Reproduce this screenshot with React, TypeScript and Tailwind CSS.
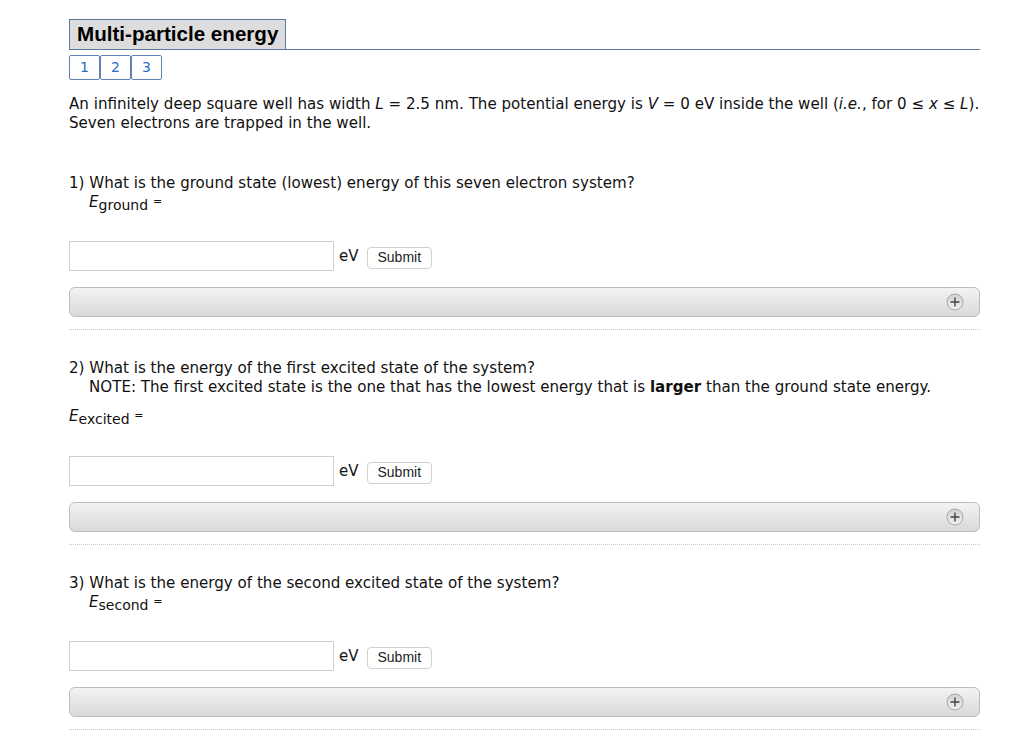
import React from "react";

const body = { fontFamily: '"DejaVu Sans", Verdana, sans-serif' };

const PlusBar = () => (
  <div className="flex h-[30px] items-center justify-end rounded-[6px] border border-[#bdbdbd] bg-gradient-to-b from-[#f3f3f3] to-[#d9d9d9] pr-[15px]">
    <svg width="18" height="18" viewBox="0 0 18 18">
      <defs>
        <linearGradient id="pg" x1="0" y1="0" x2="0" y2="1">
          <stop offset="0" stopColor="#d0d0d0" />
          <stop offset="1" stopColor="#f2f2f2" />
        </linearGradient>
      </defs>
      <circle cx="9" cy="9" r="8" fill="url(#pg)" stroke="#a8a8a8" strokeWidth="1" />
      <path d="M9 4.5v9M4.5 9h9" stroke="#444" strokeWidth="1.4" />
    </svg>
  </div>
);

const AnswerRow = () => (
  <div className="flex items-center">
    <div className="h-[30px] w-[265px] border border-[#cfcfcf] bg-white" />
    <span className="ml-[5px] text-[15px] text-[#111]" style={body}>
      eV
    </span>
    <button
      className="ml-[8px] mt-[3px] h-[22px] rounded-[4px] border border-[#d0d0d0] bg-white px-[10px] text-[14px] text-[#222]"
      style={{ fontFamily: '"Liberation Sans", Arial, sans-serif' }}
    >
      Submit
    </button>
  </div>
);

const Dotted = () => <div className="mt-[12px] border-t border-dotted border-[#c4c4c4]" />;

const Sym = ({ sub }: { sub: string }) => (
  <>
    <i>E</i>
    <span className="relative top-[3px] text-[14px]">{sub}</span>{" "}
    <span className="relative top-[-2px] text-[11px]">=</span>
  </>
);

export default function App() {
  return (
    <div className="min-h-screen bg-white pl-[69px] pr-[44px] pt-[19px] text-[#111]">
      <div className="flex items-end border-b border-[#5a7aa5]">
        <div
          className="flex h-[30px] items-center border border-b-0 border-[#5a7aa5] bg-[#dddddd] px-[7px] text-[20.6px] font-bold text-black"
          style={{ fontFamily: '"Liberation Sans", Arial, sans-serif' }}
        >
          Multi-particle energy
        </div>
      </div>
      <div className="mt-[5px] flex" style={body}>
        {["1", "2", "3"].map((t) => (
          <div
            key={t}
            className="flex h-[25px] w-[31px] items-center justify-center rounded-[2px] border border-[#5f83b5] text-[14px] text-[#2b6cc4]"
          >
            {t}
          </div>
        ))}
      </div>

      <div className="text-[15.1px] leading-[19px]" style={body}>
        <p className="mt-[15px]">
          An infinitely deep square well has width <i>L</i> = 2.5 nm. The potential energy is <i>V</i> = 0 eV
          inside the well (<i>i.e.</i>, for 0 ≤ <i>x</i> ≤ <i>L</i>).
          <br />
          Seven electrons are trapped in the well.
        </p>

        <p className="mt-[41px]">1) What is the ground state (lowest) energy of this seven electron system?</p>
        <p className="pl-[20px]">
          <Sym sub="ground" />
        </p>
        <div className="mt-[28px]">
          <AnswerRow />
        </div>
        <div className="mt-[16px]">
          <PlusBar />
        </div>
        <Dotted />

        <p className="mt-[29px]">2) What is the energy of the first excited state of the system?</p>
        <p className="pl-[20px]">
          NOTE: The first excited state is the one that has the lowest energy that is <b>larger</b> than the ground
          state energy.
        </p>
        <p className="mt-[10px]">
          <Sym sub="excited" />
        </p>
        <div className="mt-[29px]">
          <AnswerRow />
        </div>
        <div className="mt-[16px]">
          <PlusBar />
        </div>
        <Dotted />

        <p className="mt-[29px]">3) What is the energy of the second excited state of the system?</p>
        <p className="pl-[20px]">
          <Sym sub="second" />
        </p>
        <div className="mt-[28px]">
          <AnswerRow />
        </div>
        <div className="mt-[16px]">
          <PlusBar />
        </div>
        <Dotted />
      </div>
    </div>
  );
}
